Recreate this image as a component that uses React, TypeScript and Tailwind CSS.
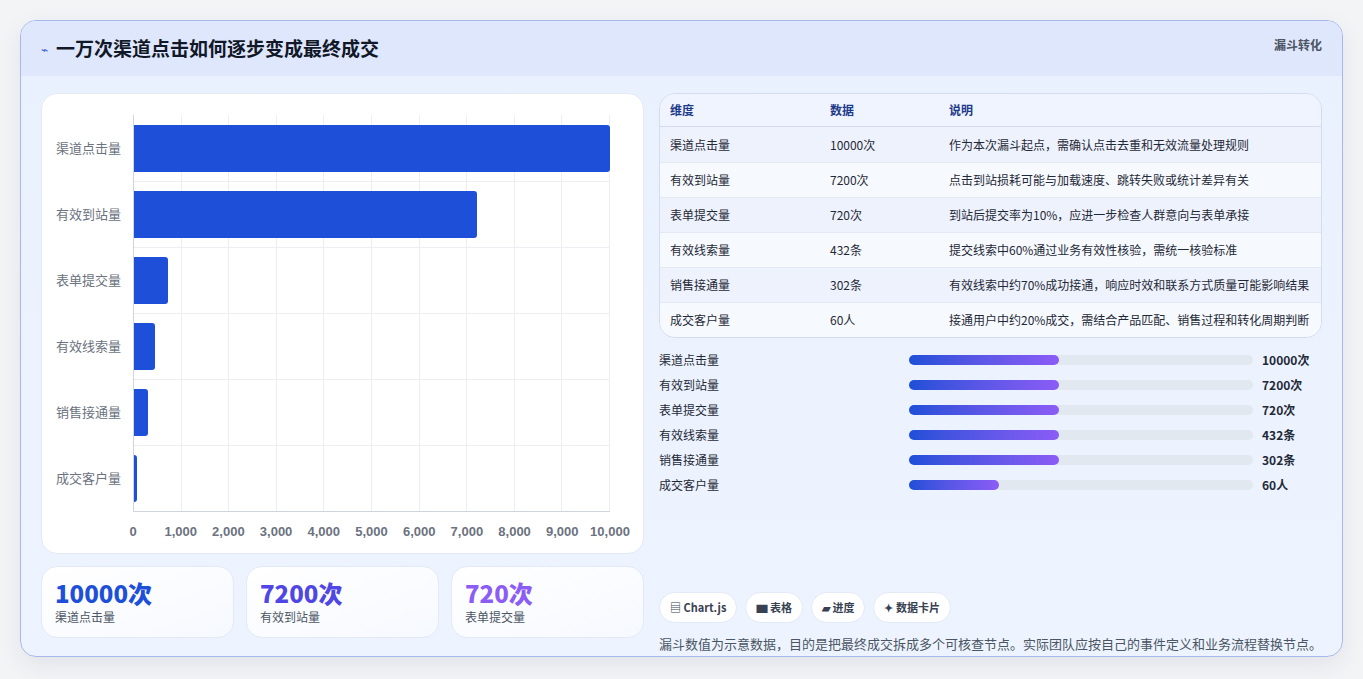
const font = { fontFamily: '"Noto Sans CJK SC", "Noto Sans", sans-serif' };

const rows = [
  { name: '渠道点击量', value: 10000, unit: '10000次', note: '作为本次漏斗起点，需确认点击去重和无效流量处理规则', fill: 150 },
  { name: '有效到站量', value: 7200, unit: '7200次', note: '点击到站损耗可能与加载速度、跳转失败或统计差异有关', fill: 150 },
  { name: '表单提交量', value: 720, unit: '720次', note: '到站后提交率为10%，应进一步检查人群意向与表单承接', fill: 150 },
  { name: '有效线索量', value: 432, unit: '432条', note: '提交线索中60%通过业务有效性核验，需统一核验标准', fill: 150 },
  { name: '销售接通量', value: 302, unit: '302条', note: '有效线索中约70%成功接通，响应时效和联系方式质量可能影响结果', fill: 150 },
  { name: '成交客户量', value: 60, unit: '60人', note: '接通用户中约20%成交，需结合产品匹配、销售过程和转化周期判断', fill: 90 },
];

function Chart() {
  const ticks = [0, 1000, 2000, 3000, 4000, 5000, 6000, 7000, 8000, 9000, 10000];
  return (
    <div className="flex h-[461px] flex-col rounded-2xl border border-[#e3e9f6] bg-white pl-[14px] pr-[14px] pt-[21px]">
      <div className="flex">
        <div className="flex w-[77px] flex-col">
          {rows.map((r) => (
            <div key={r.name} className="flex h-[66px] items-center text-[13px] text-[#6b7280]">{r.name}</div>
          ))}
        </div>
        <div className="relative h-[397px] w-[477px] border-b border-l border-[#cfd4de]">
          <div className="absolute inset-0 flex">
            {ticks.slice(1).map((t) => (
              <div key={t} className="h-full flex-1 border-r border-[#eceef3]" />
            ))}
          </div>
          <div className="absolute inset-0 flex flex-col">
            {rows.map((r, i) => (
              <div key={r.name} className={`flex h-[66px] items-center ${i > 0 ? 'border-t border-[#eceef3]' : ''}`}>
                <div className="h-[47px] rounded-r-[3px] bg-[#1d4fd8]" style={{ width: `${(r.value / 10000) * 100}%`, minWidth: 3 }} />
              </div>
            ))}
          </div>
        </div>
      </div>
      <div className="relative ml-[77px] mt-[10px] h-4 w-[477px]">
        {ticks.map((t, i) => (
          <span key={t} className="absolute -translate-x-1/2 text-[13px] font-semibold text-[#6b7280]" style={{ left: `${i * 10}%`, fontFamily: '"Liberation Sans", sans-serif' }}>
            {t.toLocaleString('en-US')}
          </span>
        ))}
      </div>
    </div>
  );
}

function Stat({ v, label, color }: { v: string; label: string; color: string }) {
  return (
    <div className="flex h-[72px] flex-1 flex-col justify-center rounded-2xl border border-[#e3e9f6] bg-gradient-to-br from-white to-[#f6f9ff] px-[13px]">
      <div className={`text-[24px] font-black leading-[30px] ${color}`}>{v}</div>
      <div className="text-[12px] text-[#4b5563]">{label}</div>
    </div>
  );
}

export default function App() {
  return (
    <div className="min-h-screen bg-[#f3f4f6] p-5" style={font}>
      <div className="h-[637px] overflow-hidden rounded-2xl border border-[#a9b8ea] bg-gradient-to-b from-[#eaf1fe] to-[#edf4ff] shadow-[0_8px_24px_rgba(30,40,90,0.08)]">
        <div className="flex h-[55px] items-start justify-between bg-[#dfe7fd] px-5">
          <div className="flex h-full items-center gap-2">
            <span className="text-[12px] text-[#3b5bdb]">⌁</span>
            <h1 className="text-[19px] font-bold text-[#111827]">一万次渠道点击如何逐步变成最终成交</h1>
          </div>
          <span className="mt-[15px] text-[12px] font-semibold text-[#4b5563]">漏斗转化</span>
        </div>
        <div className="flex gap-[15px] px-5 pt-[17px]">
          <div className="flex w-[603px] flex-col gap-3">
            <Chart />
            <div className="flex gap-3">
              <Stat v="10000次" label="渠道点击量" color="text-[#1d4fd8]" />
              <Stat v="7200次" label="有效到站量" color="text-[#4f46e5]" />
              <Stat v="720次" label="表单提交量" color="text-[#8b5cf6]" />
            </div>
          </div>
          <div className="flex flex-1 flex-col">
            <div className="overflow-hidden rounded-2xl border border-[#d5dcf0] text-[12px]">
              <div className="flex h-[33px] items-center border-b border-[#d5dcf0] bg-[#eff4ff] px-[10px] font-semibold text-[#1e3a8a]">
                <div className="w-[160px]">维度</div>
                <div className="w-[119px]">数据</div>
                <div>说明</div>
              </div>
              {rows.map((r, i) => (
                <div key={r.name} className={`flex h-[35px] items-center px-[10px] text-[#1f2937] ${i % 2 === 0 ? 'bg-[#eef2fd]' : 'bg-[#f6f9fe]'} ${i > 0 ? 'border-t border-[#e3e8f4]' : ''}`}>
                  <div className="w-[160px]">{r.name}</div>
                  <div className="w-[119px]">{r.unit}</div>
                  <div className="whitespace-nowrap">{r.note}</div>
                </div>
              ))}
            </div>
            <div className="mt-[9px] flex flex-col">
              {rows.map((r) => (
                <div key={r.name} className="flex h-[25px] items-center text-[12px] text-[#1f2937]">
                  <div className="w-[250px]">{r.name}</div>
                  <div className="h-[10px] w-[344px] rounded-full bg-[#e2e8f0]">
                    <div className="h-full rounded-full bg-gradient-to-r from-[#1d4fd8] to-[#8b5cf6]" style={{ width: r.fill }} />
                  </div>
                  <div className="ml-[9px] font-semibold">{r.unit}</div>
                </div>
              ))}
            </div>
            <div className="mt-[95px] flex gap-2 text-[11px] font-semibold text-[#374151]">
              {['▤ Chart.js', '▆ 表格', '▰ 进度', '✦ 数据卡片'].map((c) => (
                <span key={c} className="rounded-full border border-[#e3e9f6] bg-white px-[10px] py-[6px]">{c}</span>
              ))}
            </div>
            <p className="mt-[11px] whitespace-nowrap text-[13px] text-[#4b5563]">漏斗数值为示意数据，目的是把最终成交拆成多个可核查节点。实际团队应按自己的事件定义和业务流程替换节点。</p>
          </div>
        </div>
      </div>
    </div>
  );
}
